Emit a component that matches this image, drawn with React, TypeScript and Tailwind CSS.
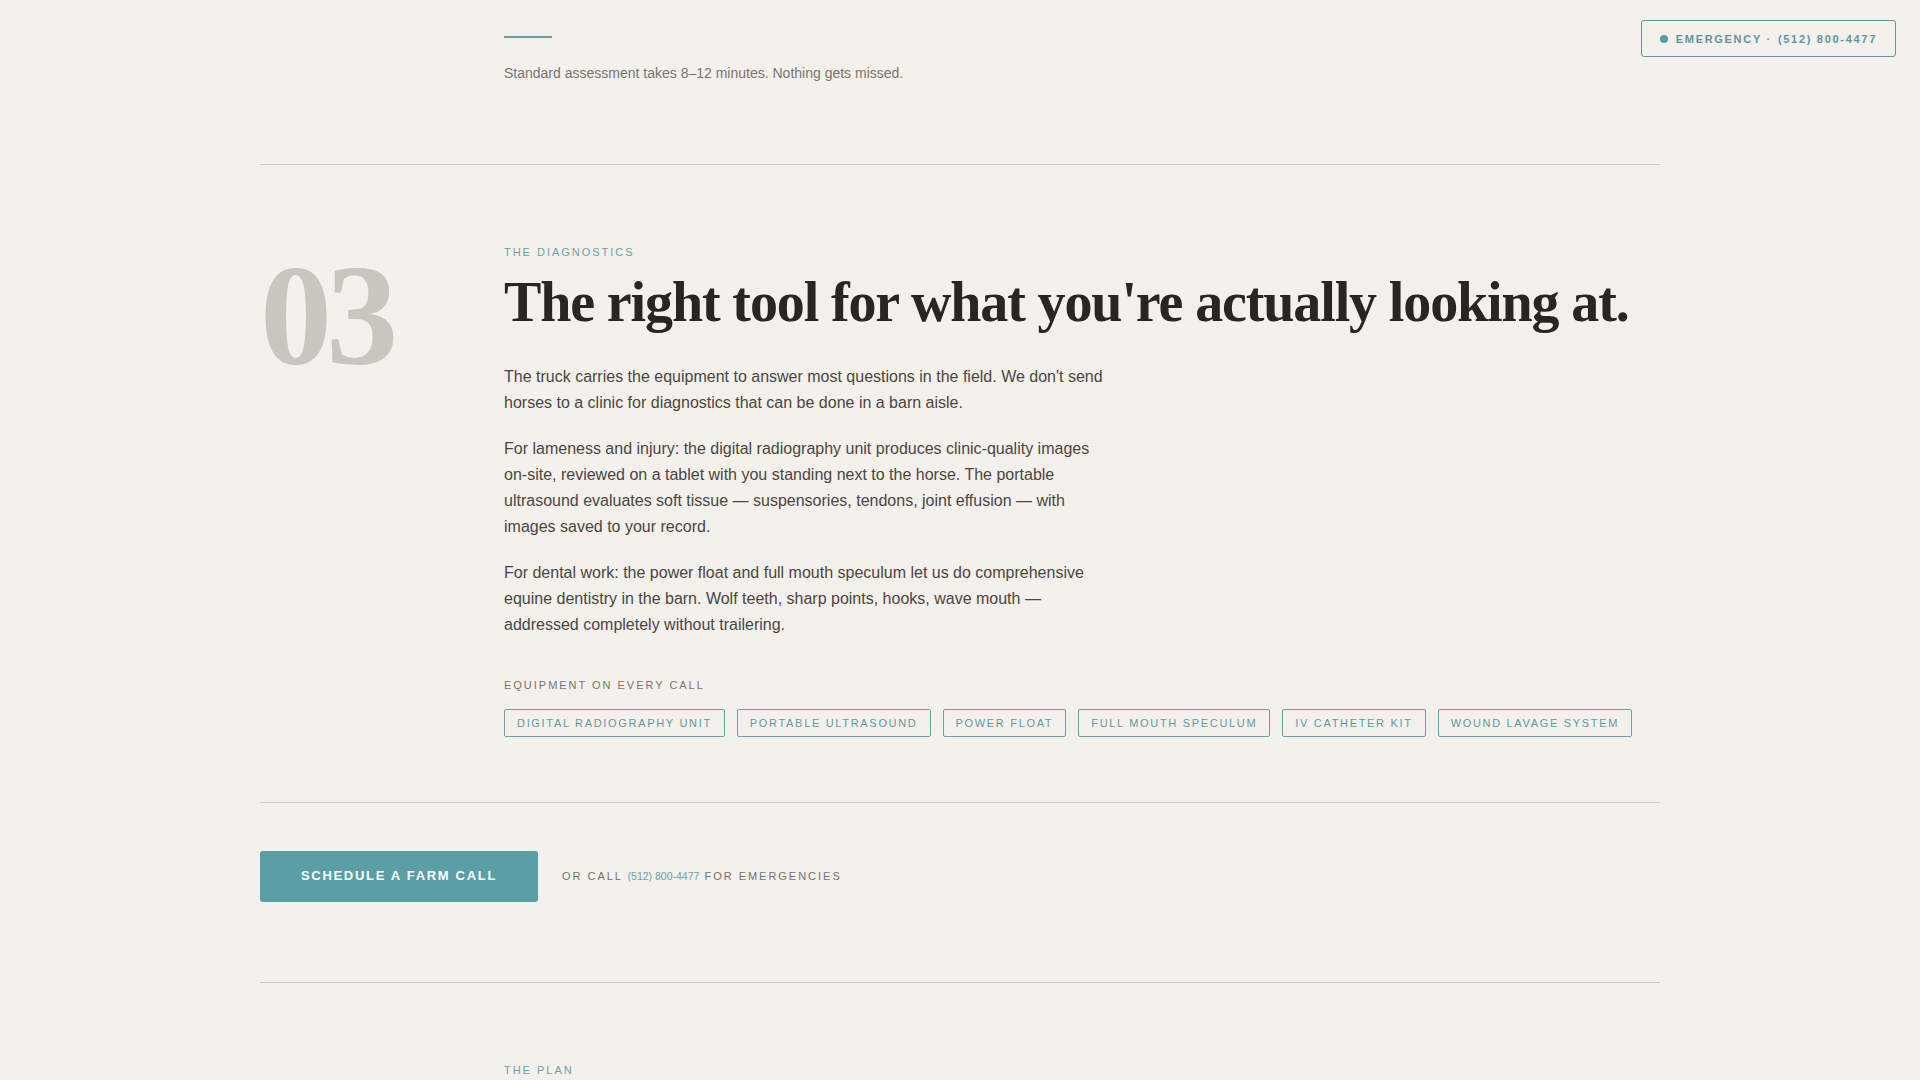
import React from "react";

const sans = "font-['Liberation_Sans',Arial,sans-serif]";
const serif = "font-['Liberation_Serif','Times_New_Roman',serif]";

const equipment = [
  "Digital Radiography Unit",
  "Portable Ultrasound",
  "Power Float",
  "Full Mouth Speculum",
  "IV Catheter Kit",
  "Wound Lavage System",
];

function EmergencyBadge() {
  return (
    <a
      href="#emergency"
      className="fixed top-5 right-6 z-10 flex h-[37px] items-center gap-2 rounded-[3px] border border-[#5d97a4] bg-[#f4f0eb] px-[18px] text-[11px] font-bold uppercase leading-4 tracking-[0.155em] text-[#5a97a1]"
    >
      <span className="block h-2 w-2 rounded-full bg-[#5a9aa5]" />
      <span>
        Emergency ·<span className="ml-[6px]">(512) 800-4477</span>
      </span>
    </a>
  );
}

function Label({ children }: { children: React.ReactNode }) {
  return (
    <p className="text-[11px] uppercase leading-4 tracking-[0.18em] text-[#6aa2a9]">
      {children}
    </p>
  );
}

export default function App() {
  return (
    <div className={`min-h-screen bg-[#f4f0eb] ${sans}`}>
      <EmergencyBadge />

      <div className="mx-auto w-[1400px]">
        {/* tail of the previous section */}
        <section className="grid grid-cols-[244px_1fr] pt-9 pb-[79px]">
          <div />
          <div>
            <div className="h-[2px] w-12 bg-[#6a9fa8]" />
            <p className="mt-[23px] text-[14px] leading-6 text-[#7a746e]">
              Standard assessment takes 8–12 minutes. Nothing gets missed.
            </p>
          </div>
        </section>

        {/* 03 — diagnostics */}
        <section className="grid grid-cols-[244px_1fr] border-t border-[#cfcac3] pt-[79px] pb-[65px]">
          <div
            className={`${serif} text-[144px] font-bold leading-none tracking-[-0.04em] text-[#c9c5bf]`}
          >
            03
          </div>
          <div>
            <Label>The Diagnostics</Label>
            <h2
              className={`${serif} mt-3 mb-[30px] text-[56px] font-bold leading-[1.1] tracking-[-0.02em] text-[#2a2521]`}
            >
              The right tool for what you're actually looking at.
            </h2>
            <div className="max-w-[610px] space-y-5 text-[16px] leading-[26px] text-[#4b4642]">
              <p>
                The truck carries the equipment to answer most questions in the
                field. We don't send horses to a clinic for diagnostics that can
                be done in a barn aisle.
              </p>
              <p>
                For lameness and injury: the digital radiography unit produces
                clinic-quality images on-site, reviewed on a tablet with you
                standing next to the horse. The portable ultrasound evaluates
                soft tissue — suspensories, tendons, joint effusion — with
                images saved to your record.
              </p>
              <p>
                For dental work: the power float and full mouth speculum let us
                do comprehensive equine dentistry in the barn. Wolf teeth, sharp
                points, hooks, wave mouth — addressed completely without
                trailering.
              </p>
            </div>

            <p className="mt-[39px] mb-4 text-[11px] uppercase leading-4 tracking-[0.18em] text-[#7a756f]">
              Equipment on every call
            </p>
            <ul className="flex flex-wrap gap-3">
              {equipment.map((item) => (
                <li
                  key={item}
                  className="rounded-[2px] border border-[#6aa0ab] px-3 py-[5px] text-[11px] uppercase leading-4 tracking-[0.153em] text-[#5e9aa3]"
                >
                  {item}
                </li>
              ))}
            </ul>
          </div>
        </section>

        {/* call to action */}
        <section className="flex items-center gap-6 border-t border-[#cfcac3] pt-12 pb-20">
          <button className="flex h-[51px] w-[278px] items-center justify-center rounded-[3px] bg-[#5c9ea6] text-[13px] font-bold uppercase tracking-[0.13em] text-white">
            Schedule a Farm Call
          </button>
          <p className="text-[11px] uppercase leading-4 tracking-[0.18em] text-[#77716b]">
            Or call{" "}
            <span className="text-[10.5px] normal-case tracking-normal text-[#6aa2a9]">
              (512) 800-4477
            </span>{" "}
            for emergencies
          </p>
        </section>

        {/* 04 — plan */}
        <section className="grid grid-cols-[244px_1fr] border-t border-[#cfcac3] pt-[79px] pb-24">
          <div />
          <div>
            <Label>The Plan</Label>
          </div>
        </section>
      </div>
    </div>
  );
}
